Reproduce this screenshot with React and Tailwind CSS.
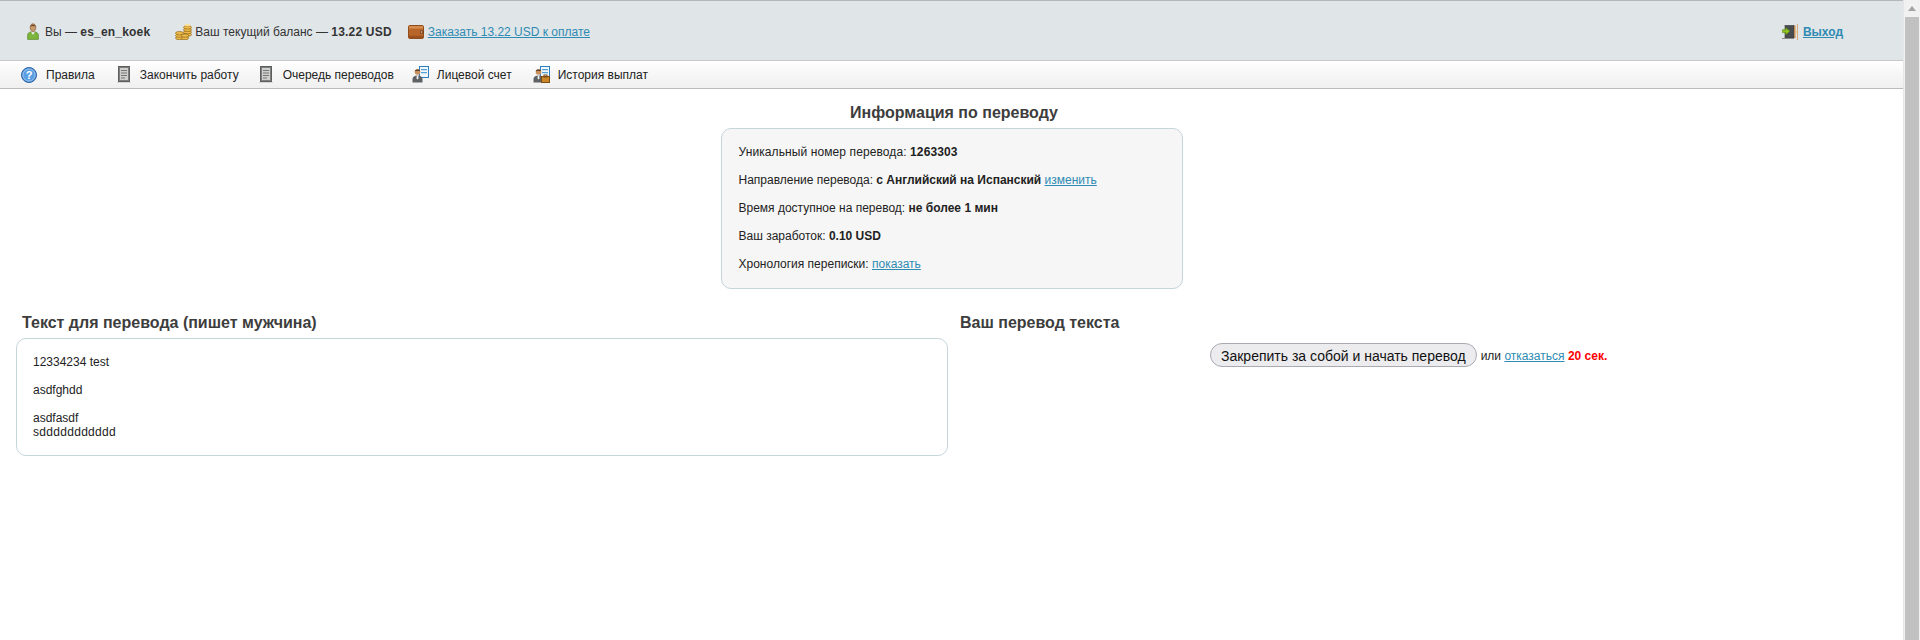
import React from 'react';

const linkCls = 'text-[#2f8bb3] underline';

function UserIcon() {
  return (
    <svg width="12" height="17" viewBox="0 0 12 17" className="shrink-0">
      <path d="M3.2 4.500C3.200 2 4.500 .8 6 .8s2.800 1.200 2.800 3.700S7.500 8.600 6 8.600 3.200 7 3.200 4.500z" fill="#c99a6b" stroke="#7a4f2a" strokeWidth=".6" />
      <path d="M3.400 3.600C3.800 1 8.200 1 8.600 3.600 7 2.800 5 2.800 3.400 3.600z" fill="#6b4423" />
      <path d="M.6 16.400v-4.200c0-2 1.900-3 3.400-3.400L6 11l2-2.200c1.500.4 3.400 1.400 3.400 3.400v4.200z" fill="#7cb53b" stroke="#4f7d1f" strokeWidth=".6" />
      <path d="M3.800 9 6 11.800 8.200 9 6 10z" fill="#f4f6ee" />
    </svg>
  );
}

function CoinStack({ x, top, bottom, w }) {
  const coins = [];
  for (let y = bottom; y >= top; y -= 2.400) {
    coins.push(<ellipse key={y} cx={x} cy={y} rx={w} ry="1.700" />);
  }
  return <g>{coins}</g>;
}

function CoinsIcon() {
  return (
    <svg width="17" height="17" viewBox="0 0 17 17" className="shrink-0">
      <g stroke="#8f6414" strokeWidth=".7" fill="#eebc4c">
        <CoinStack x={12.500} top={2} bottom={11.600} w={4} />
        <CoinStack x={4.500} top={8.800} bottom={15} w={4} />
        <CoinStack x={10} top={11} bottom={15} w={3.600} />
      </g>
      <ellipse cx="12.500" cy="2" rx="3" ry="1" fill="#fbe39b" />
    </svg>
  );
}

function WalletIcon() {
  return (
    <svg width="16" height="14" viewBox="0 0 16 14" className="shrink-0">
      <rect x=".5" y=".5" width="15" height="13" rx="1.200" fill="#b9652a" stroke="#934c1c" />
      <rect x="1" y="1.200" width="14" height="2.400" fill="#d88f4f" />
      <rect x="1" y="10.800" width="14" height="2.200" fill="#9a4f1e" />
      <rect x="12" y="5.500" width="3.500" height="3" fill="#7d4019" />
      <circle cx="13.500" cy="7" r=".8" fill="#d9d2c4" />
    </svg>
  );
}

function ExitIcon() {
  return (
    <svg width="16" height="16" viewBox="0 0 16 16" className="shrink-0">
      <rect x="3" y="1.500" width="9" height="12.500" fill="#4a4d4f" stroke="#33363a" strokeWidth=".6" />
      <path d="M12 1.500h1.500V14H12z" fill="#c98d4d" />
      <path d="M15 0h1v16h-1z" fill="#d9a873" />
      <path d="M13.600 7h1v1.400h-1z" fill="#f0c060" />
      <path d="M.4 5.800h3.200V3.600L8 7.200l-4.400 3.600V8.600H.4z" fill="#8fc31f" stroke="#55800f" strokeWidth=".6" />
      <path d="M0 14h12v1H0z" fill="#8b8b8b" />
    </svg>
  );
}

function HelpIcon() {
  return (
    <svg width="16" height="16" viewBox="0 0 16 16" className="shrink-0">
      <circle cx="8" cy="8" r="7.500" fill="#2f79c9" stroke="#2a62a8" />
      <circle cx="8" cy="8" r="6.200" fill="#5a9fe2" stroke="#cfe3f7" strokeWidth=".7" />
      <text x="8" y="12" textAnchor="middle" fontSize="11" fontWeight="700" fill="#fff" fontFamily="Liberation Sans, sans-serif">?</text>
    </svg>
  );
}

function DocIcon() {
  return (
    <svg width="14" height="17" viewBox="0 0 14 17" className="shrink-0">
      <rect x="1.500" y=".5" width="11" height="15" fill="#7d7e7e" stroke="#5d5e5e" />
      <rect x="3" y="2" width="8" height="12" fill="#cfcfcd" />
      <path d="M4 4h6v1H4zM4 6.500h6v1H4zM4 9h6v1H4zM4 11.500h4v1H4z" fill="#777" />
      <rect x="0" y="16" width="14" height="1" fill="#d5d5d5" />
    </svg>
  );
}

function PersonCardIcon({ badge }) {
  return (
    <svg width="17" height="17" viewBox="0 0 17 17" className="shrink-0">
      <rect x="7.500" y=".5" width="9" height="11" fill="#f3f8fc" stroke="#2c7fc1" />
      <path d="M9 3h6v1.200H9zM9 6h6v1.200H9z" fill="#54a1d8" />
      <circle cx="5.500" cy="6" r="2.800" fill="#c98f5f" />
      <path d="M2.800 5.200C3 3 8 3 8.200 5.200 6.500 4.500 4.500 4.500 2.800 5.200z" fill="#5b3a1f" />
      <path d="M.5 16.500v-3.500c0-2 2-3.400 5-3.400s5 1.400 5 3.400v3.500z" fill="#5d6164" />
      <path d="M4.800 9.600h1.400l.3 3-1 1-1-1z" fill="#f2f2f2" />
      {badge && (
        <g>
          <rect x="8.500" y="10.500" width="8" height="6" fill="#c9862a" stroke="#7a4d12" />
          <rect x="11" y="9" width="3" height="2" fill="none" stroke="#7a4d12" />
        </g>
      )}
    </svg>
  );
}

function NavItem({ icon, label, className }) {
  return (
    <div className={`flex items-center ${className}`}>
      {icon}
      <span>{label}</span>
    </div>
  );
}

function App() {
  return (
    <div className="flex h-[640px] overflow-hidden bg-white font-['Liberation_Sans',Arial,sans-serif] text-[12px] leading-[14px] text-[#222]">
      <div className="w-[1903px] shrink-0">
        {/* Top bar */}
        <header className="flex h-[61px] items-center justify-between border-t border-b border-t-[#b5b7b9] border-b-[#c6c8c9] bg-[#e0e5e8] pl-[27px] pr-[60px] text-[#333]">
          <div className="flex items-center pt-[2px]">
            <UserIcon />
            <span className="ml-[6px]">Вы — <b className="tracking-[0.2px]">es_en_koek</b></span>
            <span className="ml-[25px]"><CoinsIcon /></span>
            <span className="ml-[3px]">Ваш текущий баланс — <b className="tracking-[0.2px]">13.22 USD</b></span>
            <span className="ml-[16px]"><WalletIcon /></span>
            <a className={`ml-[4px] ${linkCls}`}>Заказать 13.22 USD к оплате</a>
          </div>
          <div className="flex items-center pt-[2px]">
            <ExitIcon />
            <a className={`ml-[5px] font-bold ${linkCls}`}>Выход</a>
          </div>
        </header>

        {/* Menu */}
        <nav className="flex h-[28px] items-center border-b border-[#b9bbbc] bg-gradient-to-b from-white via-[#f6f6f6] to-[#f0f0f0] pl-[21px] text-[#222]">
          <NavItem icon={<HelpIcon />} label={<span className="ml-[9px]">Правила</span>} />
          <NavItem className="ml-[22px]" icon={<DocIcon />} label={<span className="ml-[9px]">Закончить работу</span>} />
          <NavItem className="ml-[20px]" icon={<DocIcon />} label={<span className="ml-[10px]">Очередь переводов</span>} />
          <NavItem className="ml-[18px]" icon={<PersonCardIcon />} label={<span className="ml-[8px]">Лицевой счет</span>} />
          <NavItem className="ml-[21px]" icon={<PersonCardIcon badge />} label={<span className="ml-[8px]">История выплат</span>} />
        </nav>

        {/* Info */}
        <section className="mx-auto mt-[15px] w-[462px]">
          <h2 className="pl-[5px] text-center text-[16px] leading-[18px] font-bold text-[#3d3d3d]">Информация по переводу</h2>
          <div className="mt-[6px] flex h-[161px] flex-col gap-[14px] rounded-[10px] border border-[#c5d5dc] bg-[#f6f6f6] px-[17px] pt-[16px] text-[#222]">
            <p className="tracking-[0.1px]">Уникальный номер перевода: <b>1263303</b></p>
            <p>Направление перевода: <b>с Английский на Испанский</b> <a className={linkCls}>изменить</a></p>
            <p>Время доступное на перевод: <b>не более 1 мин</b></p>
            <p>Ваш заработок: <b>0.10 USD</b></p>
            <p>Хронология переписки: <a className={linkCls}>показать</a></p>
          </div>
        </section>

        {/* Source + translation */}
        <section className="mt-[25px] flex">
          <div className="ml-[16px] w-[932px]">
            <h2 className="ml-[6px] text-[16px] leading-[18px] font-bold text-[#3d3d3d]">Текст для перевода (пишет мужчина)</h2>
            <div className="mt-[6px] h-[118px] rounded-[10px] border border-[#c5d5dc] px-[16px] pt-[16px]">
              <p>12334234 test</p>
              <p className="mt-[14px]">asdfghdd</p>
              <p className="mt-[14px]">asdfasdf</p>
              <p className="tracking-[0.3px]">sddddddddddd</p>
            </div>
          </div>
          <div className="ml-[12px] w-[910px]">
            <h2 className="text-[16px] leading-[18px] font-bold text-[#3d3d3d]">Ваш перевод текста</h2>
            <div className="mt-[11px] flex items-center pl-[250px]">
              <button className="h-[24px] rounded-full border border-[#a9abb3] bg-[#ececee] px-[10px] pt-[1px] text-[14px] leading-[16px] whitespace-nowrap text-[#111]">
                Закрепить за собой и начать перевод
              </button>
              <span className="ml-[4px] whitespace-nowrap pt-[2px]">
                или <a className={linkCls}>отказаться</a> <b className="text-[#ff0000]">20 сек.</b>
              </span>
            </div>
          </div>
        </section>
      </div>

      {/* Browser scrollbar */}
      <div className="flex w-[17px] shrink-0 flex-col border-l border-[#e6e6e6] bg-[#f1f1f1]">
        <div className="flex h-[17px] items-center justify-center">
          <svg width="8" height="5" viewBox="0 0 8 5"><path d="M4 0l4 5H0z" fill="#a3a3a3" /></svg>
        </div>
        <div className="mx-[1px] flex-1 bg-[#c1c1c1]" />
      </div>
    </div>
  );
}

export default App;
